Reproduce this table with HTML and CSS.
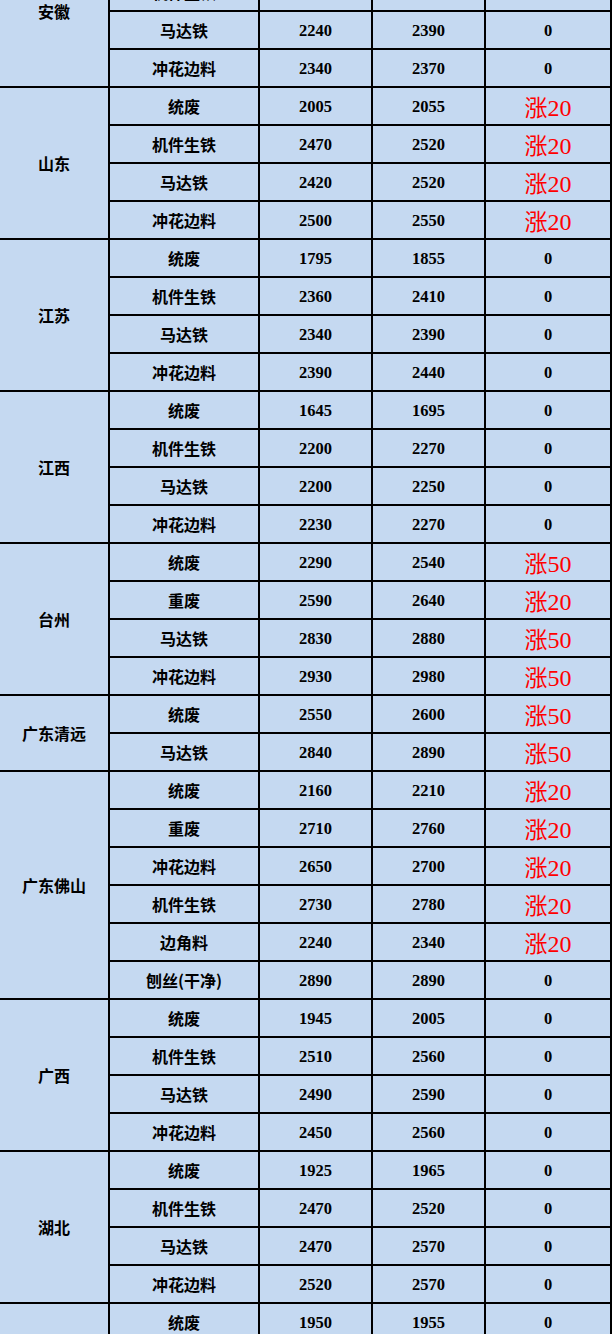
FILE: index.html
```html
<!DOCTYPE html>
<html lang="zh">
<head>
<meta charset="utf-8">
<title>废钢价格</title>
<link rel="stylesheet" href="styles.css">
</head>
<body>
<div class="sheet">
<table class="price-table">
<colgroup>
<col class="c-region"><col class="c-name"><col class="c-num"><col class="c-num"><col class="c-chg">
</colgroup>
<tbody>
<tr><td class="region" rowspan="4">安徽</td><td class="name">统废</td><td class="num">1900</td><td class="num">1950</td><td class="chg">0</td></tr>
<tr><td class="name">机件生铁</td><td class="num">2290</td><td class="num">2340</td><td class="chg">0</td></tr>
<tr><td class="name">马达铁</td><td class="num">2240</td><td class="num">2390</td><td class="chg">0</td></tr>
<tr><td class="name">冲花边料</td><td class="num">2340</td><td class="num">2370</td><td class="chg">0</td></tr>

<tr><td class="region" rowspan="4">山东</td><td class="name">统废</td><td class="num">2005</td><td class="num">2055</td><td class="chg up">涨<span class="d">20</span></td></tr>
<tr><td class="name">机件生铁</td><td class="num">2470</td><td class="num">2520</td><td class="chg up">涨<span class="d">20</span></td></tr>
<tr><td class="name">马达铁</td><td class="num">2420</td><td class="num">2520</td><td class="chg up">涨<span class="d">20</span></td></tr>
<tr><td class="name">冲花边料</td><td class="num">2500</td><td class="num">2550</td><td class="chg up">涨<span class="d">20</span></td></tr>

<tr><td class="region" rowspan="4">江苏</td><td class="name">统废</td><td class="num">1795</td><td class="num">1855</td><td class="chg">0</td></tr>
<tr><td class="name">机件生铁</td><td class="num">2360</td><td class="num">2410</td><td class="chg">0</td></tr>
<tr><td class="name">马达铁</td><td class="num">2340</td><td class="num">2390</td><td class="chg">0</td></tr>
<tr><td class="name">冲花边料</td><td class="num">2390</td><td class="num">2440</td><td class="chg">0</td></tr>

<tr><td class="region" rowspan="4">江西</td><td class="name">统废</td><td class="num">1645</td><td class="num">1695</td><td class="chg">0</td></tr>
<tr><td class="name">机件生铁</td><td class="num">2200</td><td class="num">2270</td><td class="chg">0</td></tr>
<tr><td class="name">马达铁</td><td class="num">2200</td><td class="num">2250</td><td class="chg">0</td></tr>
<tr><td class="name">冲花边料</td><td class="num">2230</td><td class="num">2270</td><td class="chg">0</td></tr>

<tr><td class="region" rowspan="4">台州</td><td class="name">统废</td><td class="num">2290</td><td class="num">2540</td><td class="chg up">涨<span class="d">50</span></td></tr>
<tr><td class="name">重废</td><td class="num">2590</td><td class="num">2640</td><td class="chg up">涨<span class="d">20</span></td></tr>
<tr><td class="name">马达铁</td><td class="num">2830</td><td class="num">2880</td><td class="chg up">涨<span class="d">50</span></td></tr>
<tr><td class="name">冲花边料</td><td class="num">2930</td><td class="num">2980</td><td class="chg up">涨<span class="d">50</span></td></tr>

<tr><td class="region" rowspan="2">广东清远</td><td class="name">统废</td><td class="num">2550</td><td class="num">2600</td><td class="chg up">涨<span class="d">50</span></td></tr>
<tr><td class="name">马达铁</td><td class="num">2840</td><td class="num">2890</td><td class="chg up">涨<span class="d">50</span></td></tr>

<tr><td class="region" rowspan="6">广东佛山</td><td class="name">统废</td><td class="num">2160</td><td class="num">2210</td><td class="chg up">涨<span class="d">20</span></td></tr>
<tr><td class="name">重废</td><td class="num">2710</td><td class="num">2760</td><td class="chg up">涨<span class="d">20</span></td></tr>
<tr><td class="name">冲花边料</td><td class="num">2650</td><td class="num">2700</td><td class="chg up">涨<span class="d">20</span></td></tr>
<tr><td class="name">机件生铁</td><td class="num">2730</td><td class="num">2780</td><td class="chg up">涨<span class="d">20</span></td></tr>
<tr><td class="name">边角料</td><td class="num">2240</td><td class="num">2340</td><td class="chg up">涨<span class="d">20</span></td></tr>
<tr><td class="name">刨丝(干净)</td><td class="num">2890</td><td class="num">2890</td><td class="chg">0</td></tr>

<tr><td class="region" rowspan="4">广西</td><td class="name">统废</td><td class="num">1945</td><td class="num">2005</td><td class="chg">0</td></tr>
<tr><td class="name">机件生铁</td><td class="num">2510</td><td class="num">2560</td><td class="chg">0</td></tr>
<tr><td class="name">马达铁</td><td class="num">2490</td><td class="num">2590</td><td class="chg">0</td></tr>
<tr><td class="name">冲花边料</td><td class="num">2450</td><td class="num">2560</td><td class="chg">0</td></tr>

<tr><td class="region" rowspan="4">湖北</td><td class="name">统废</td><td class="num">1925</td><td class="num">1965</td><td class="chg">0</td></tr>
<tr><td class="name">机件生铁</td><td class="num">2470</td><td class="num">2520</td><td class="chg">0</td></tr>
<tr><td class="name">马达铁</td><td class="num">2470</td><td class="num">2570</td><td class="chg">0</td></tr>
<tr><td class="name">冲花边料</td><td class="num">2520</td><td class="num">2570</td><td class="chg">0</td></tr>

<tr><td class="region" rowspan="4">湖南</td><td class="name">统废</td><td class="num">1950</td><td class="num">1955</td><td class="chg">0</td></tr>
<tr><td class="name">机件生铁</td><td class="num">2450</td><td class="num">2500</td><td class="chg">0</td></tr>
<tr><td class="name">马达铁</td><td class="num">2450</td><td class="num">2550</td><td class="chg">0</td></tr>
<tr><td class="name">冲花边料</td><td class="num">2500</td><td class="num">2550</td><td class="chg">0</td></tr>
</tbody>
</table>
</div>
</body>
</html>
```
FILE: styles.css
```css
html, body {
  margin: 0;
  padding: 0;
  background: #c5d9f1;
}
body {
  width: 612px;
  height: 1334px;
  overflow: hidden;
}
.sheet {
  width: 612px;
  overflow: hidden;
}
.price-table {
  margin-top: -66px;
  margin-left: -2px;
  width: 612px;
  border-collapse: collapse;
  table-layout: fixed;
  background: #c5d9f1;
}
.c-region { width: 110px; }
.c-name { width: 150px; }
.c-num { width: 113px; }
.c-chg { width: 126px; }
.price-table td {
  border: 2px solid #000;
  height: 36px;
  padding: 0;
  text-align: center;
  vertical-align: middle;
  color: #000;
}
.region, .name {
  font-family: "Noto Sans CJK SC", sans-serif;
  font-size: 16px;
  font-weight: 700;
  line-height: 20px;
}
.price-table .num, .price-table .chg {
  font-family: "Liberation Serif", serif;
  font-size: 16.5px;
  font-weight: 700;
  line-height: 20px;
  padding-top: 1px;
  height: 35px;
}
.price-table .chg.up {
  color: #ff0000;
  font-family: "Noto Sans CJK SC", sans-serif;
  font-size: 23px;
  font-weight: 400;
  line-height: 1;
  padding-top: 2px;
  height: 34px;
}
.chg.up .d {
  font-family: "Liberation Serif", serif;
  font-size: 24px;
  line-height: 1;
}
```
